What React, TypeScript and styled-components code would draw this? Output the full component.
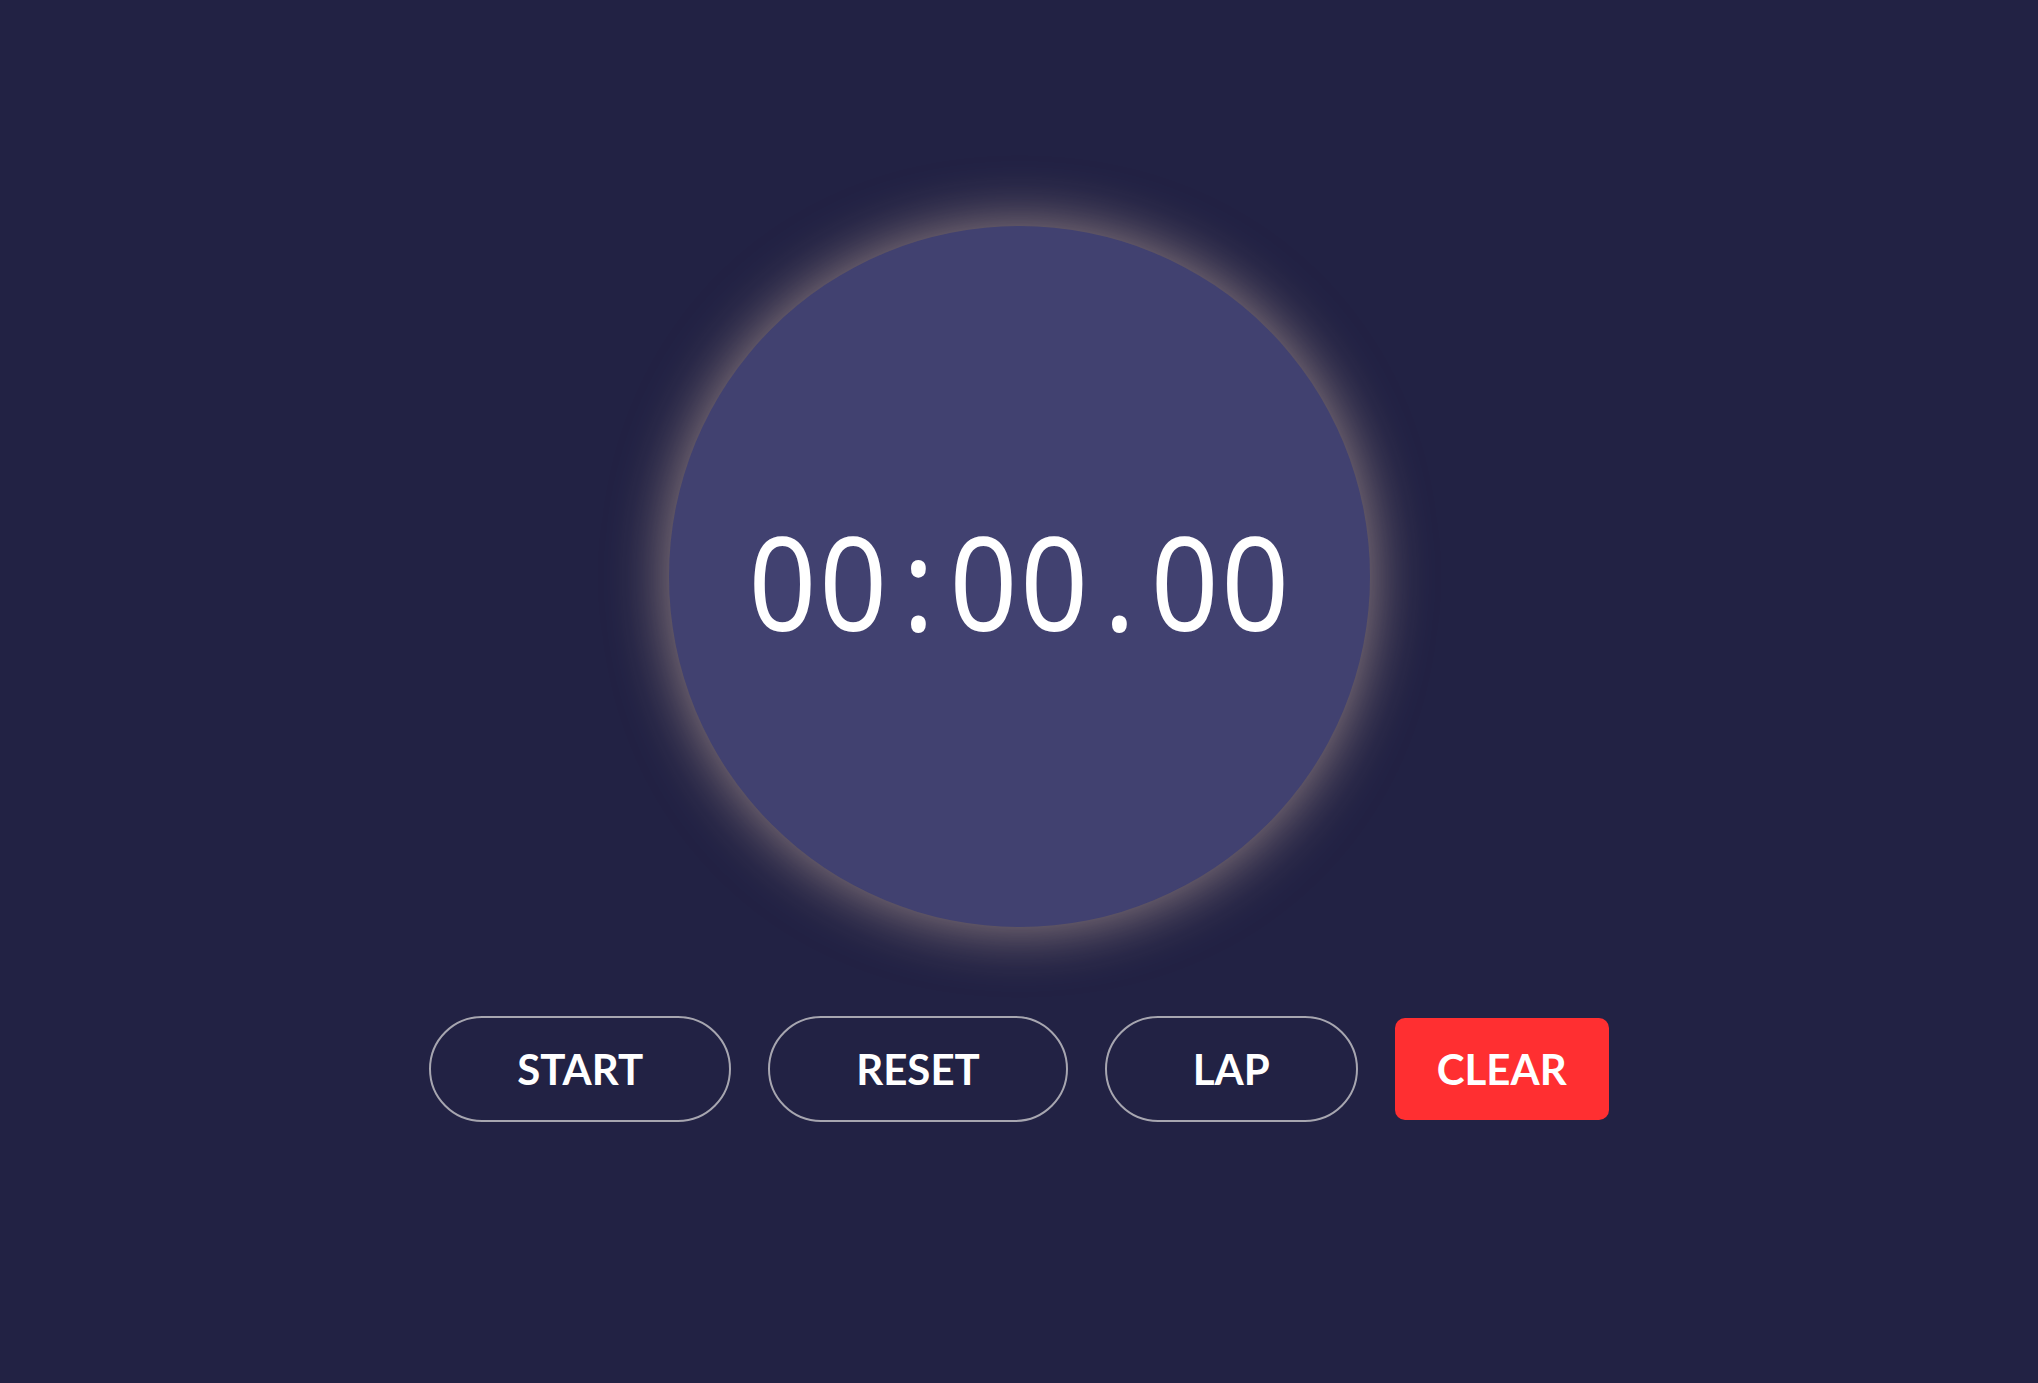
import React from "react";
import styled, { createGlobalStyle } from "styled-components";

const Global = createGlobalStyle`
  html, body {
    margin: 0;
    padding: 0;
    background: #222244;
    height: 100%;
  }
  #root { min-height: 100vh; }
`;

const Page = styled.main`
  min-height: 100vh;
  box-sizing: border-box;
  background: #222244;
  padding-top: 226px;
  display: flex;
  flex-direction: column;
  align-items: center;
  font-family: Lato, "Noto Sans", sans-serif;
`;

const Dial = styled.div`
  width: 701px;
  height: 701px;
  border-radius: 50%;
  background: #414170;
  box-shadow: 0 0 60px rgba(255, 220, 190, 0.55);
  display: flex;
  align-items: center;
  justify-content: center;
`;

const Readout = styled.div`
  display: flex;
  align-items: baseline;
  color: #ffffff;
  font-family: "Noto Sans", "Open Sans", sans-serif;
  font-size: 129px;
  font-weight: 400;
  line-height: 1;
  margin-top: 10px;
  transform: scaleX(0.92);
`;

const Digits = styled.span`
  letter-spacing: 3px;
  margin-right: -3px;
`;

const Sep = styled.span<{ $w: number }>`
  width: ${(p) => p.$w}px;
  text-align: center;
`;

const Controls = styled.div`
  display: flex;
  align-items: center;
  gap: 37px;
  margin-top: 89px;
`;

const Button = styled.button<{ $danger?: boolean }>`
  font-family: Lato, "Noto Sans", sans-serif;
  font-weight: 700;
  font-size: 42px;
  color: #ffffff;
  cursor: pointer;
  box-sizing: border-box;
  ${(p) =>
    p.$danger
      ? `
    height: 102px;
    padding: 0 42px;
    background: #ff2f31;
    border: none;
    border-radius: 10px;
  `
      : `
    height: 106px;
    padding: 0 86px;
    background: transparent;
    border: 2px solid #a7a6b0;
    border-radius: 999px;
  `}
`;

export default function App() {
  return (
    <>
      <Global />
      <Page>
        <Dial>
          <Readout>
            <Digits>00</Digits>
            <Sep $w={68}>:</Sep>
            <Digits>00</Digits>
            <Sep $w={68}>.</Sep>
            <Digits>00</Digits>
          </Readout>
        </Dial>
        <Controls>
          <Button>START</Button>
          <Button>RESET</Button>
          <Button>LAP</Button>
          <Button $danger>CLEAR</Button>
        </Controls>
      </Page>
    </>
  );
}
